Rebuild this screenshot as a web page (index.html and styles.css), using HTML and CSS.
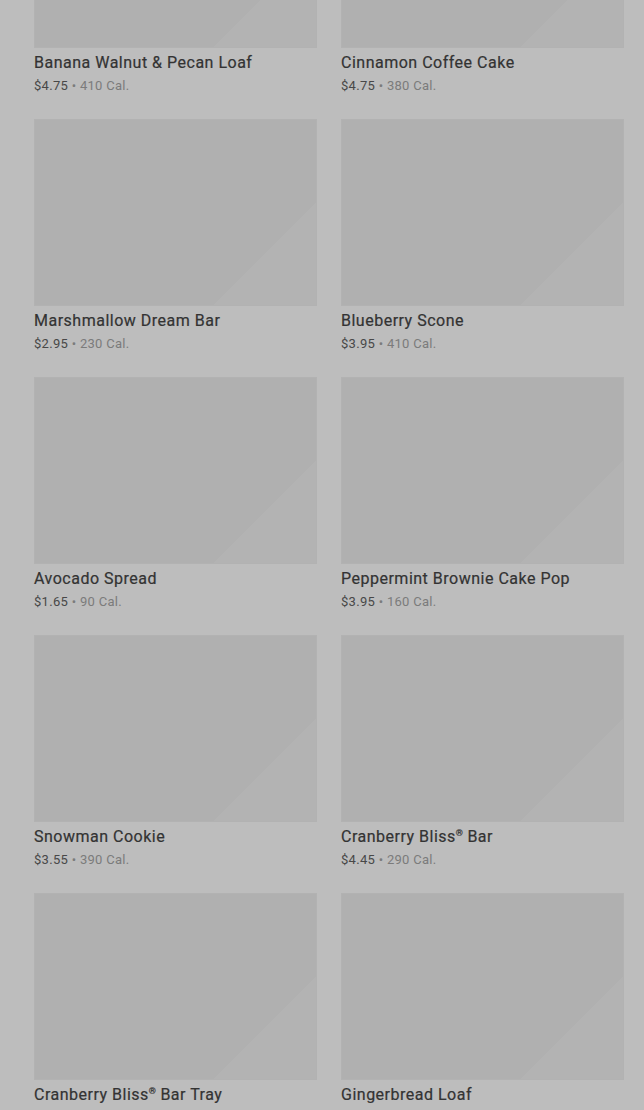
FILE: index.html
```html
<!DOCTYPE html>
<html lang="en">
<head>
    <meta charset="UTF-8">
    <meta name="viewport" content="width=device-width, initial-scale=1.0">
    <title>Bakery</title>
    <link rel="stylesheet" href="styles.css">
</head>
<body>

    <div class="grade">
        <div class="item">
            <div class="foto"></div>
            <h3>Banana Walnut &amp; Pecan Loaf</h3>
            <p><span class="preco">$4.75</span> &bull; 410 Cal.</p>
        </div>
        <div class="item">
            <div class="foto"></div>
            <h3>Cinnamon Coffee Cake</h3>
            <p><span class="preco">$4.75</span> &bull; 380 Cal.</p>
        </div>
        <div class="item">
            <div class="foto"></div>
            <h3>Marshmallow Dream Bar</h3>
            <p><span class="preco">$2.95</span> &bull; 230 Cal.</p>
        </div>
        <div class="item">
            <div class="foto"></div>
            <h3>Blueberry Scone</h3>
            <p><span class="preco">$3.95</span> &bull; 410 Cal.</p>
        </div>
        <div class="item">
            <div class="foto"></div>
            <h3>Avocado Spread</h3>
            <p><span class="preco">$1.65</span> &bull; 90 Cal.</p>
        </div>
        <div class="item">
            <div class="foto"></div>
            <h3>Peppermint Brownie Cake Pop</h3>
            <p><span class="preco">$3.95</span> &bull; 160 Cal.</p>
        </div>
        <div class="item">
            <div class="foto"></div>
            <h3>Snowman Cookie</h3>
            <p><span class="preco">$3.55</span> &bull; 390 Cal.</p>
        </div>
        <div class="item">
            <div class="foto"></div>
            <h3>Cranberry Bliss<sup>&reg;</sup> Bar</h3>
            <p><span class="preco">$4.45</span> &bull; 290 Cal.</p>
        </div>
        <div class="item">
            <div class="foto"></div>
            <h3>Cranberry Bliss<sup>&reg;</sup> Bar Tray</h3>
        </div>
        <div class="item">
            <div class="foto"></div>
            <h3>Gingerbread Loaf</h3>
        </div>
    </div>

</body>
</html>
```

FILE: styles.css
```css
body {
    margin: 0;
    background: #bdbdbd;
    font-family: Roboto, "Liberation Sans", Arial, sans-serif;
    height: 1110px;
    overflow: hidden;
}

.grade {
    display: grid;
    grid-template-columns: 283px 283px;
    column-gap: 24px;
    row-gap: 24px;
    padding: 0 20px 0 34px;
    margin-top: -139px;
}

.item {
    height: 234px;
}

.foto {
    height: 187px;
    background: linear-gradient(135deg, #b0b0b0 78%, #b3b3b3 78%);
    border: 1px solid #b2b2b2;
    box-sizing: border-box;
    margin-bottom: 5px;
}

.item h3 {
    margin: 0;
    font-size: 16px;
    font-weight: 400;
    line-height: 20px;
    color: #333;
    letter-spacing: 0.5px;
    -webkit-text-stroke: 0.2px #333;
}

.item h3 sup {
    font-size: 9px;
    line-height: 0;
    vertical-align: 6px;
    letter-spacing: 0;
}

.item p {
    margin: 3px 0 0;
    font-size: 13px;
    line-height: 20px;
    color: #7b7b7b;
    letter-spacing: 0.3px;
}

.preco {
    color: #484848;
}
```
